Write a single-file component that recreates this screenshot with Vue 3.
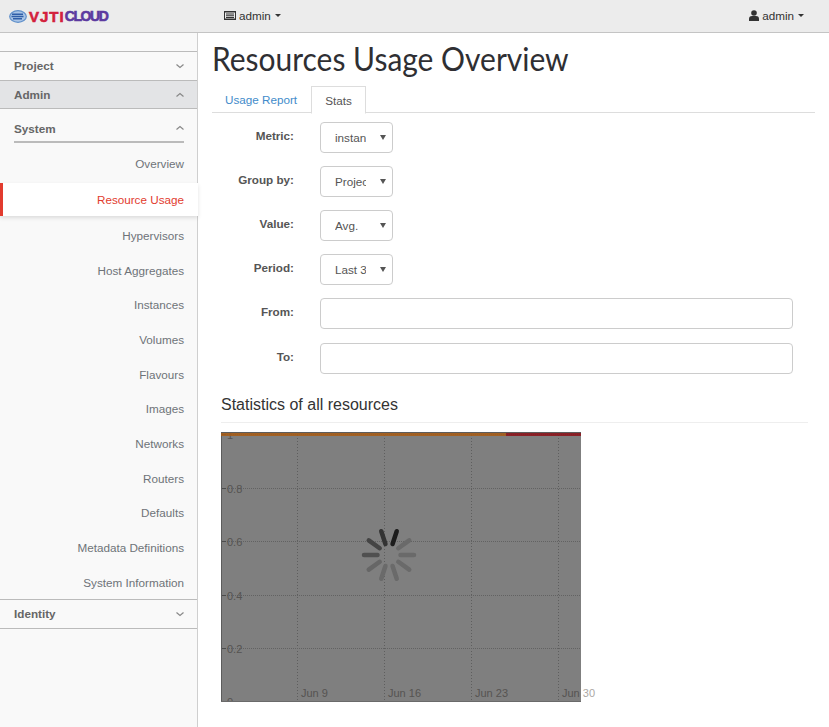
<template>
  <div class="page">
    <header class="navbar">
      <div class="brand">
        <svg class="brand-icon" width="18" height="13" viewBox="0 0 18 13">
          <ellipse cx="9" cy="6.5" rx="8.3" ry="5.8" fill="#a9c4e6" stroke="#5f8fca" stroke-width="1.2" />
          <path d="M3 4.2h11M2.5 6.5h12M4 8.8h9" stroke="#2f5ea8" stroke-width="1.5" fill="none" />
        </svg>
        <span class="brand-a">VJTI</span><span class="brand-b">CLOUD</span>
      </div>
      <div class="nav-project">
        <svg width="12" height="11" viewBox="0 0 12 11">
          <path d="M0 1h12v9H0z" fill="#333" />
          <path d="M1 2.5h10v6H1z" fill="#eee" />
          <path d="M2 3.5h8v1H2zM2 5.2h8v1H2zM2 6.9h8v1H2z" fill="#333" />
        </svg>
        admin <i class="caret"></i>
      </div>
      <div class="nav-user">
        <svg width="10" height="11" viewBox="0 0 10 11">
          <circle cx="5" cy="3" r="2.8" fill="#333" />
          <path d="M0 11V8.5C0 6.8 1.5 6 3 6h4c1.5 0 3 .8 3 2.5V11z" fill="#333" />
        </svg>
        admin <i class="caret"></i>
      </div>
    </header>

    <div class="main">
      <aside class="sidebar">
        <div class="section first">
          <span>Project</span>
          <svg class="chev" width="9" height="6" viewBox="0 0 9 6"><path d="M1.5 1.5l3.5 3 3.5-3" /></svg>
        </div>
        <div class="section open">
          <span>Admin</span>
          <svg class="chev" width="9" height="6" viewBox="0 0 9 6"><path d="M1.5 4.5l3.5-3 3.5 3" /></svg>
        </div>
        <div class="group">
          <span>System</span>
          <svg class="chev" width="9" height="6" viewBox="0 0 9 6"><path d="M1.5 4.5l3.5-3 3.5 3" /></svg>
        </div>
        <nav class="links">
          <a v-for="l in links" :key="l" :class="{ active: l === 'Resource Usage' }">{{ l }}</a>
        </nav>
        <div class="section last">
          <span>Identity</span>
          <svg class="chev" width="9" height="6" viewBox="0 0 9 6"><path d="M1.5 1.5l3.5 3 3.5-3" /></svg>
        </div>
      </aside>

      <main class="content">
        <h1>Resources Usage Overview</h1>
        <ul class="tabs">
          <li>Usage Report</li>
          <li class="current">Stats</li>
        </ul>

        <form class="form">
          <div v-for="f in selects" :key="f.label" class="row">
            <label>{{ f.label }}</label>
            <div class="select">
              <span>{{ f.value }}</span>
              <i></i>
            </div>
          </div>
          <div class="row input-row">
            <label>From:</label>
            <input type="text" />
          </div>
          <div class="row input-row">
            <label>To:</label>
            <input type="text" />
          </div>
        </form>

        <h3>Statistics of all resources</h3>

        <div class="chart">
          <svg class="plot" width="360" height="270" viewBox="0 0 360 270">
            <g class="grid">
              <line v-for="x in gridX" :key="x" :x1="x" :x2="x" y1="0" y2="270" />
              <line v-for="t in ticks" :key="t.label" class="h" x1="0" x2="360" :y1="t.y" :y2="t.y" />
            </g>
            <g class="tick-marks">
              <line v-for="t in ticks" :key="t.label" x1="0" x2="5" :y1="t.y" :y2="t.y" />
            </g>
            <g class="labels">
              <text v-for="t in ticks" :key="t.label" x="6" :y="t.y + 4">{{ t.label }}</text>
              <text v-for="d in dates" :key="d.label" :x="d.x" y="265">{{ d.label }}</text>
            </g>
          </svg>
          <div class="loading">
            <svg width="360" height="270" viewBox="0 0 360 270">
              <path d="M0 .5H360" stroke="#5c5c5c" />
              <path d="M.5 0V270" stroke="#5c5c5c" />
              <path d="M0 269.5H360" stroke="#6a6a6a" />
              <path d="M0 2.5H285" stroke="#a85c14" stroke-width="3" stroke-opacity=".85" />
              <path d="M285 2.5H360" stroke="#8c1018" stroke-width="3" stroke-opacity=".85" />
              <g transform="translate(168 123)" stroke-width="4.5" stroke-linecap="round">
                <line v-for="s in spokes" :key="s.angle" x1="11.5" y1="0" x2="25" y2="0"
                  :stroke="s.color" :transform="`rotate(${s.angle})`" />
              </g>
            </svg>
          </div>
        </div>
      </main>
    </div>
  </div>
</template>

<script setup>
const links = [
  'Overview', 'Resource Usage', 'Hypervisors', 'Host Aggregates', 'Instances', 'Volumes', 'Flavours',
  'Images', 'Networks', 'Routers', 'Defaults', 'Metadata Definitions', 'System Information'
];

const selects = [
  { label: 'Metric:', value: 'instances' },
  { label: 'Group by:', value: 'Project' },
  { label: 'Value:', value: 'Avg.' },
  { label: 'Period:', value: 'Last 30 days' }
];

const gridX = [76.5, 163.5, 250.5, 337.5];

const ticks = [
  { label: '1', y: 2.5 },
  { label: '0.8', y: 56.5 },
  { label: '0.6', y: 109.5 },
  { label: '0.4', y: 163.5 },
  { label: '0.2', y: 216.5 },
  { label: '0', y: 269.5 }
];

const dates = [
  { label: 'Jun 9', x: 80 },
  { label: 'Jun 16', x: 167 },
  { label: 'Jun 23', x: 254 },
  { label: 'Jun 30', x: 341 }
];

// darkest spoke sits just right of twelve o'clock, fading anticlockwise
const shades = ['#1c1c1c', '#333', '#444', '#505050', '#666', '#6a6a6a', '#6a6a6a', '#6a6a6a', '#6a6a6a', '#6a6a6a'];
const spokes = shades.map((color, i) => ({ color, angle: -72 - i * 36 }));
</script>

<style>
html, body { margin: 0; background: #fff; }
</style>

<style scoped>
.page {
  height: 727px;
  overflow: hidden;
  display: flex;
  flex-direction: column;
  font-family: "Liberation Sans", Arial, sans-serif;
  font-size: 11.7px;
  color: #333;
}

.navbar {
  height: 32px;
  flex: none;
  display: flex;
  align-items: center;
  background: #ececec;
  border-bottom: 1px solid #c4c4c4;
}
.brand {
  width: 224px;
  padding-left: 9px;
  box-sizing: border-box;
  display: flex;
  align-items: center;
  font-weight: 700;
  -webkit-text-stroke: 0.6px currentColor;
}
.brand-icon { margin-right: 2px; }
.brand-a { color: #d3203c; font-size: 15px; letter-spacing: 1px; }
.brand-b { color: #5c3aa0; font-size: 14px; letter-spacing: -1.4px; }
.nav-project, .nav-user { display: flex; align-items: center; gap: 3px; padding-bottom: 2px; }
.nav-user { margin-left: auto; margin-right: 25px; }
.caret {
  width: 0;
  height: 0;
  margin-left: 1px;
  border-top: 3px solid #333;
  border-left: 3px solid transparent;
  border-right: 3px solid transparent;
}

.main { flex: 1; display: flex; min-height: 0; }

.sidebar {
  width: 197px;
  flex: none;
  background: #f9f9f9;
  border-right: 1px solid #cfcfcf;
  padding-top: 18px;
}
.section, .group {
  display: flex;
  align-items: center;
  justify-content: space-between;
  font-weight: 700;
  color: #666;
}
.section { height: 27px; padding: 0 13px 1px 14px; border-bottom: 1px solid #bbb; }
.section.first { border-top: 1px solid #bbb; }
.section.open { padding-bottom: 0; background: #e3e4e6; }
.section.last { border-top: 1px solid #bbb; }
.group {
  height: 26px;
  margin: 0 13px 0 14px;
  padding-top: 6px;
  border-bottom: 2px solid #bbb;
}
.chev { fill: none; stroke: #888; stroke-width: 1.2; }

.links { display: flex; flex-direction: column; }
.links a {
  height: 34.67px;
  display: flex;
  align-items: center;
  justify-content: flex-end;
  padding-right: 13px;
  color: #6e7378;
}
.links a:first-child { margin-top: 3px; }
.links a.active {
  height: 33px;
  margin: 2px -1px 2.5px 0;
  padding-right: 14px;
  color: #e23b2e;
  background: #fff;
  border-left: 3px solid #e23b2e;
  box-shadow: 0 2px 4px rgba(0, 0, 0, 0.12);
}

.content { flex: 1; min-width: 0; padding: 0 14px; }

h1 {
  margin: 5px 0 8px;
  font-family: Lato, sans-serif;
  font-weight: 400;
  font-size: 33px;
  line-height: 40px;
  white-space: nowrap;
  color: #2f2f33;
  transform: scaleX(0.908);
  transform-origin: left center;
}

.tabs {
  list-style: none;
  display: flex;
  margin: 0;
  padding: 0;
  height: 26px;
  border-bottom: 1px solid #ddd;
}
.tabs li { padding: 0 13px; line-height: 27px; color: #428bca; margin-right: 1px; }
.tabs li.current {
  height: 26px;
  color: #555;
  background: #fff;
  border: 1px solid #ddd;
  border-bottom-color: #fff;
}

.form { margin-top: 9px; display: flex; flex-direction: column; gap: 13px; }
.row { display: flex; height: 31px; gap: 26px; }
.row label {
  width: 82px;
  text-align: right;
  font-weight: 700;
  color: #555;
  line-height: 28px;
}
.select {
  width: 73px;
  box-sizing: border-box;
  position: relative;
  border: 1px solid #ccc;
  border-radius: 4px;
  background: #fff;
  color: #555;
  line-height: 29px;
  padding-left: 14px;
}
.select span { display: block; width: 31px; overflow: hidden; white-space: nowrap; }
.select i {
  position: absolute;
  right: 6px;
  top: 12px;
  width: 0;
  height: 0;
  border-top: 5px solid #555;
  border-left: 3px solid transparent;
  border-right: 3px solid transparent;
}
.input-row input {
  width: 473px;
  box-sizing: border-box;
  border: 1px solid #ccc;
  border-radius: 4px;
  background: #fff;
  outline: none;
}
.input-row + .input-row { margin-top: 1px; }

h3 {
  margin: 20px 7px 9px 9px;
  padding-bottom: 6px;
  border-bottom: 1px solid #eee;
  font-weight: 400;
  font-size: 16px;
  line-height: 22px;
  color: #333;
}

.chart {
  position: relative;
  width: 360px;
  height: 270px;
  margin-left: 9px;
}
.plot { display: block; overflow: visible; clip-path: inset(0 -40px 0 0); }
.grid line { stroke: #bcbcbc; stroke-width: 1; stroke-dasharray: 1 2; }
.grid line.h { stroke: #c4c4c4; stroke-dasharray: 1 1; }
.tick-marks line { stroke: #999; stroke-width: 1; }
.labels text { font-size: 11px; fill: #aca8a4; }
.loading { position: absolute; inset: 0; background: rgba(0, 0, 0, 0.5); }
.loading svg { display: block; }
</style>
